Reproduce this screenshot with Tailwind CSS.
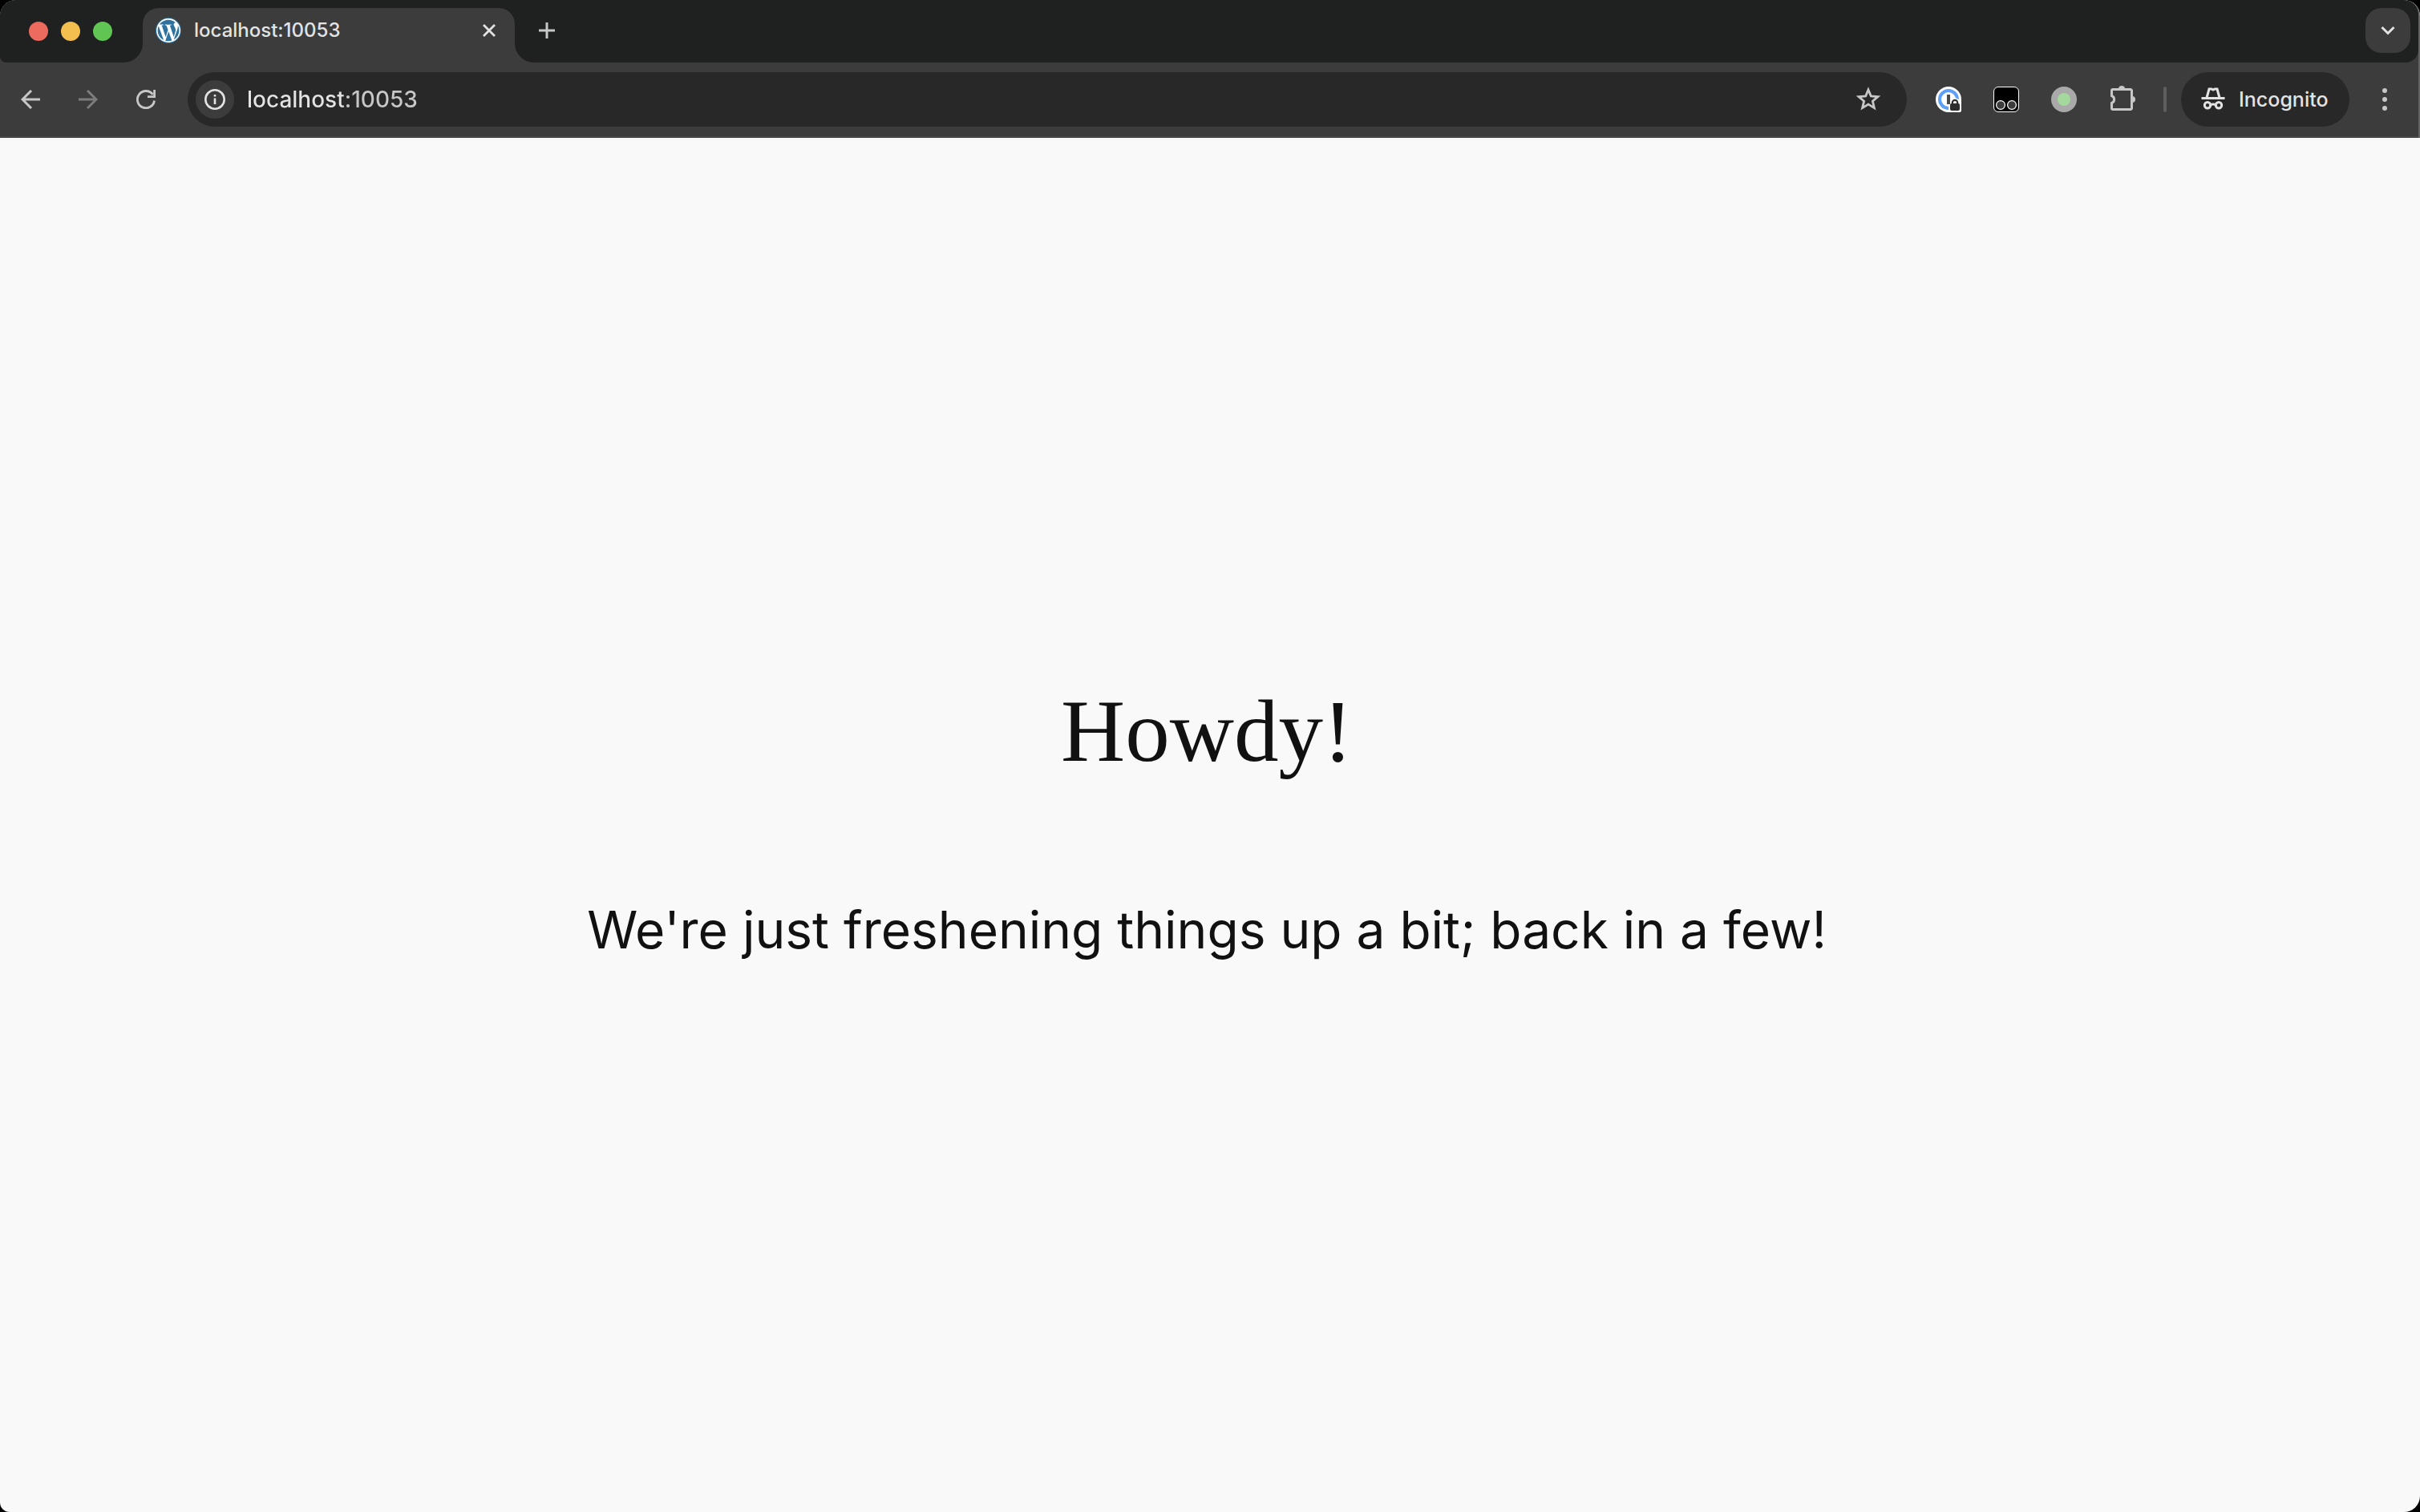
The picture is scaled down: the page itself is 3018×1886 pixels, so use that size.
<!DOCTYPE html>
<html lang="en">
<head>
<meta charset="utf-8">
<title>localhost:10053</title>
<script src="https://cdn.jsdelivr.net/npm/@tailwindcss/browser@4"></script>
</head>
<body class="bg-black font-['Inter',sans-serif]">
<div class="flex min-h-screen flex-col overflow-hidden rounded-t-[20px] rounded-br-[20px] rounded-bl-[12px] bg-[#f9f9f9]">
  <header class="rounded-tr-[20px] border-r-2 border-[#636363] bg-[#3c3c3c]">
    <!-- Tab strip -->
    <div class="flex h-[78px]">
      <div class="flex w-[178px] shrink-0 items-center gap-4 rounded-br-[24px] rounded-bl-[8px] bg-[#1f2120] pl-9">
        <button aria-label="Close window" class="size-6 rounded-full bg-[#ed6a5e]"></button>
        <button aria-label="Minimize window" class="size-6 rounded-full bg-[#f5bf4f]"></button>
        <button aria-label="Zoom window" class="size-6 rounded-full bg-[#61c554]"></button>
      </div>
      <div class="w-[464px] shrink-0 bg-linear-to-b from-[#1f2120] from-50% to-[#3c3c3c] to-50% pt-[10px]">
        <div class="flex h-[68px] items-start rounded-t-[20px] bg-[#3c3c3c] pt-3 pr-4 pl-4">
          <svg class="size-8 shrink-0" viewBox="0 0 24 24">
            <circle cx="12" cy="12" r="12" fill="#2f719f"/>
            <circle cx="12" cy="12" r="11.2" fill="#fff"/>
            <g fill="#2f719f" transform="translate(.84 .84) scale(.93)"><path d="M21.469 6.825c.84 1.537 1.318 3.3 1.318 5.175 0 3.979-2.156 7.456-5.363 9.325l3.295-9.527c.615-1.54.82-2.771.82-3.864 0-.405-.026-.78-.07-1.11m-7.981.105c.647-.03 1.232-.105 1.232-.105.582-.075.514-.93-.067-.899 0 0-1.755.135-2.88.135-1.064 0-2.85-.15-2.85-.15-.585-.03-.661.855-.075.885 0 0 .54.061 1.125.09l1.68 4.605-2.37 7.08L5.354 6.9c.649-.03 1.234-.1 1.234-.1.585-.075.516-.93-.065-.896 0 0-1.746.138-2.874.138-.2 0-.438-.008-.69-.015C4.911 3.15 8.235 1.215 12 1.215c2.809 0 5.365 1.072 7.286 2.833-.046-.003-.091-.009-.141-.009-1.06 0-1.812.923-1.812 1.914 0 .89.513 1.643 1.06 2.531.411.72.89 1.643.89 2.977 0 .915-.354 1.994-.821 3.479l-1.075 3.585-3.9-11.61zM12 22.784c-1.059 0-2.081-.153-3.048-.437l3.237-9.406 3.315 9.087c.024.053.05.101.078.149-1.12.393-2.325.609-3.582.609M1.211 12c0-1.564.336-3.05.935-4.39L7.29 21.709C3.694 19.96 1.212 16.271 1.211 12"/></g>
          </svg>
          <span class="ml-4 flex-1 text-[24px] leading-8 font-medium text-[#e3e3e3]">localhost:10053</span>
          <button aria-label="Close tab" class="grid size-8 place-items-center">
            <svg class="size-4" viewBox="0 0 16 16" fill="none" stroke="#e3e3e3" stroke-width="2.8"><path d="M1 1l14 14M15 1L1 15"/></svg>
          </button>
        </div>
      </div>
      <div class="flex flex-1 items-start rounded-tr-[18px] rounded-br-[16px] rounded-bl-[24px] bg-[#1f2120] pt-[10px] pr-[10px] pl-3">
        <button aria-label="New tab" class="grid size-14 place-items-center">
          <svg class="size-5" viewBox="0 0 20 20" fill="none" stroke="#c7c7c7" stroke-width="3"><path d="M10 0v20M0 10h20"/></svg>
        </button>
        <button aria-label="Search tabs" class="ml-auto grid size-14 place-items-center rounded-[20px] bg-[#3c3c3c]">
          <svg class="size-5" viewBox="0 0 20 20" fill="none" stroke="#e3e3e3" stroke-width="3"><path d="M2.500 6l7.500 7.500L17.500 6"/></svg>
        </button>
      </div>
    </div>
    <!-- Toolbar -->
    <div class="flex h-[94px] items-center border-b-2 border-[#474747] pr-[18px] pl-[14px]">
      <div class="flex gap-6">
        <button aria-label="Back" class="grid size-12 place-items-center">
          <svg class="size-6" viewBox="0 0 24 24" fill="none" stroke="#c7c7c7" stroke-width="3"><path d="M24 12H2M13 1L2 12l11 11"/></svg>
        </button>
        <button aria-label="Forward" class="grid size-12 place-items-center">
          <svg class="size-6" viewBox="0 0 24 24" fill="none" stroke="#7c7c7c" stroke-width="3"><path d="M0 12h22M11 1l11 11-11 11"/></svg>
        </button>
        <button aria-label="Reload" class="grid size-12 place-items-center">
          <svg class="size-6" viewBox="0 0 24 24" fill="none" stroke="#c7c7c7" stroke-width="2.800"><path d="M20.500 5.800A10.600 10.600 0 1 0 22.500 13.500M22.600 0v8.600H14"/></svg>
        </button>
      </div>
      <form class="ml-7 flex h-[68px] flex-1 items-center rounded-full bg-[#282828] pr-6 pl-[10px]">
        <button type="button" aria-label="View site information" class="grid size-12 place-items-center rounded-full bg-[#3c3c3c]">
          <svg class="size-[26px]" viewBox="0 0 26 26" fill="none" stroke="#e3e3e3" stroke-width="2.600"><circle cx="13" cy="13" r="11.700"/><path d="M13 11.500v7.500M13 7v2.600"/></svg>
        </button>
        <input aria-label="Address" value="localhost:10053" class="ml-4 flex-1 bg-linear-to-r from-[#e3e3e3] from-[119px] to-[#c7c7c7] to-[119px] bg-clip-text text-[28px] leading-9 font-medium text-transparent outline-none">
        <button type="button" aria-label="Bookmark this tab" class="grid size-12 place-items-center">
          <svg class="size-8" viewBox="0 0 32 32" fill="none" stroke="#c7c7c7" stroke-width="2.800"><path d="M16 4l3.300 7.900 8.600.7-6.500 5.600 2 8.400L16 22.100l-7.400 4.500 2-8.400-6.500-5.600 8.600-.7z"/></svg>
        </button>
      </form>
      <div class="ml-7 flex gap-6">
        <button aria-label="Password manager" class="grid size-12 place-items-center">
          <svg class="size-8" viewBox="0 0 32 32"><circle cx="16" cy="16" r="16" fill="#fff"/><path d="M16 16h16v13a3 3 0 0 1-3 3H16z" fill="#fff"/><circle cx="16" cy="16" r="11" fill="none" stroke="#5e9ff8" stroke-width="4"/><path d="M16 30V24l2-3 1-5 5-2 5 2 3 5v8a3 3 0 0 1-3 3H16z" fill="#fff"/><path d="M14 10h4v12h-4z" fill="#4a4a4a"/><rect x="18" y="21" width="12" height="9" rx="2" fill="#2d2d2d"/><path d="M20.800 22v-2a3.200 3.200 0 0 1 6.400 0v2" fill="none" stroke="#2d2d2d" stroke-width="2.200"/></svg>
        </button>
        <button aria-label="User scripts" class="grid size-12 place-items-center">
          <svg class="size-8" viewBox="0 0 32 32" stroke="#fff"><rect x=".5" y=".5" width="31" height="31" rx="5.500" fill="#000"/><g fill="#3c3c3c" stroke="#fff" stroke-width="1.200"><circle cx="9" cy="23" r="5.400"/><circle cx="23" cy="23" r="5.400"/></g></svg>
        </button>
        <button aria-label="Recorder" class="grid size-12 place-items-center">
          <svg class="size-8" viewBox="0 0 32 32"><circle cx="16" cy="16" r="16" fill="#a9a9a9"/><circle cx="16" cy="16" r="8" fill="#a5d89d"/></svg>
        </button>
        <button aria-label="Extensions" class="grid size-12 place-items-center">
          <svg class="size-9" viewBox="0 0 36 36"><path d="M6 5.500h22a1.500 1.500 0 0 1 1.500 1.500v22a1.500 1.500 0 0 1-1.500 1.500H6A1.500 1.500 0 0 1 4.500 29v-6.500a4.800 4.800 0 0 0 0-9V7A1.500 1.500 0 0 1 6 5.500z" fill="none" stroke="#c7c7c7" stroke-width="3" transform="translate(1)"/><path d="M14 5a4 4 0 0 1 8 0zM31 14a4 4 0 0 1 0 8z" fill="#c7c7c7"/></svg>
        </button>
      </div>
      <div class="ml-7 h-8 w-1 rounded-full bg-[#5e5e5e]"></div>
      <button class="ml-[18px] flex h-[68px] w-[210px] items-center rounded-full bg-[#282828] pl-6 text-[25px] leading-8 font-medium text-[#e3e3e3]">
        <svg class="size-8" viewBox="0 0 32 32" fill="none" stroke="#e3e3e3" stroke-width="3"><path d="M1.500 14.500h29"/><path d="M8 14l3-11h3l2 1 2-1h3l3 11"/><circle cx="9" cy="23.300" r="3.700"/><circle cx="23" cy="23.300" r="3.700"/><path d="M12.500 23q3.500-2 7 0"/></svg>
        <span class="ml-4">Incognito</span>
      </button>
      <button aria-label="Menu" class="ml-5 grid size-12 place-items-center">
        <svg class="h-7 w-6" viewBox="0 0 24 28" fill="#c7c7c7"><circle cx="12" cy="3" r="3"/><circle cx="12" cy="14" r="3"/><circle cx="12" cy="25" r="3"/></svg>
      </button>
    </div>
  </header>
  <main class="flex flex-1 flex-col items-center justify-center gap-[134px] pr-2 pb-1 text-center text-[#111]">
    <h1 class="font-['Liberation_Serif',serif] text-[111px] leading-[132px]">Howdy!</h1>
    <p class="text-[64px] leading-[96px]">We're just freshening things up a bit; back in a few!</p>
  </main>
</div>
</body>
</html>
